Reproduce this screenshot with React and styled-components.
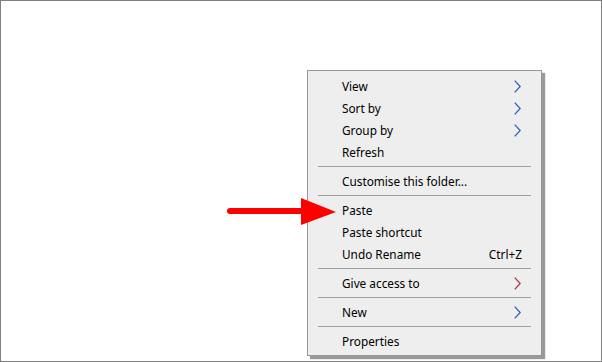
import styled, { createGlobalStyle } from 'styled-components';

const GlobalStyle = createGlobalStyle`
    html, body {
        margin: 0;
        padding: 0;
        background: #ffffff;
    }
    body {
        font-family: "Noto Sans", "DejaVu Sans", sans-serif;
    }
`;

const Page = styled.div`
    position: relative;
    box-sizing: border-box;
    width: 602px;
    height: 362px;
    border: 1px solid #808080;
    background: #ffffff;
    overflow: hidden;
`;

const Menu = styled.ul`
    position: absolute;
    left: 306px;
    top: 69px;
    box-sizing: border-box;
    width: 235px;
    margin: 0;
    padding: 4px 0 3px;
    list-style: none;
    background: #eeeeee;
    border: 1px solid #979797;
    box-shadow: 3px 3px 1px rgba(0, 0, 0, 0.4);
`;

const Item = styled.li`
    display: flex;
    align-items: center;
    justify-content: space-between;
    height: 22px;
    padding: 0 20px 0 34px;
    font-size: 11.8px;
    line-height: 20px;
    color: #000000;
`;

const Label = styled.span`
    margin-top: -1px;
`;

const Shortcut = styled.span`
    margin-top: -1px;
    margin-right: -1px;
`;

const Separator = styled.li`
    height: 1px;
    margin: 3px 10px;
    background: #a0a0a0;
`;

const Chevron = ({ color }) => (
  <svg width="7" height="13" viewBox="0 0 7 13">
    <path d="M0.7 0.6 L6.2 6.5 L0.7 12.4" fill="none" stroke={color} strokeWidth="1.3" />
  </svg>
);

const Arrow = styled.svg`
    position: absolute;
    left: 225px;
    top: 196px;
`;

const items = [
  { label: 'View', sub: '#2b5fbd' },
  { label: 'Sort by', sub: '#2b5fbd' },
  { label: 'Group by', sub: '#2b5fbd' },
  { label: 'Refresh' },
  'sep',
  { label: 'Customise this folder...' },
  'sep',
  { label: 'Paste' },
  { label: 'Paste shortcut' },
  { label: 'Undo Rename', shortcut: 'Ctrl+Z' },
  'sep',
  { label: 'Give access to', sub: '#b03040' },
  'sep',
  { label: 'New', sub: '#2b5fbd' },
  'sep',
  { label: 'Properties' },
];

export default function App() {
  return (
    <Page>
      <GlobalStyle />
      <Menu>
        {items.map((it, i) =>
          it === 'sep' ? (
            <Separator key={i} />
          ) : (
            <Item key={i}>
              <Label>{it.label}</Label>
              {it.sub && <Chevron color={it.sub} />}
              {it.shortcut && <Shortcut>{it.shortcut}</Shortcut>}
            </Item>
          )
        )}
      </Menu>
      <Arrow width="112" height="30" viewBox="0 0 112 30">
        <line x1="4" y1="14" x2="78" y2="14" stroke="#ff0000" strokeWidth="6" strokeLinecap="round" />
        <polygon points="75,1 110,15 75,28" fill="#ff0000" />
      </Arrow>
    </Page>
  );
}
